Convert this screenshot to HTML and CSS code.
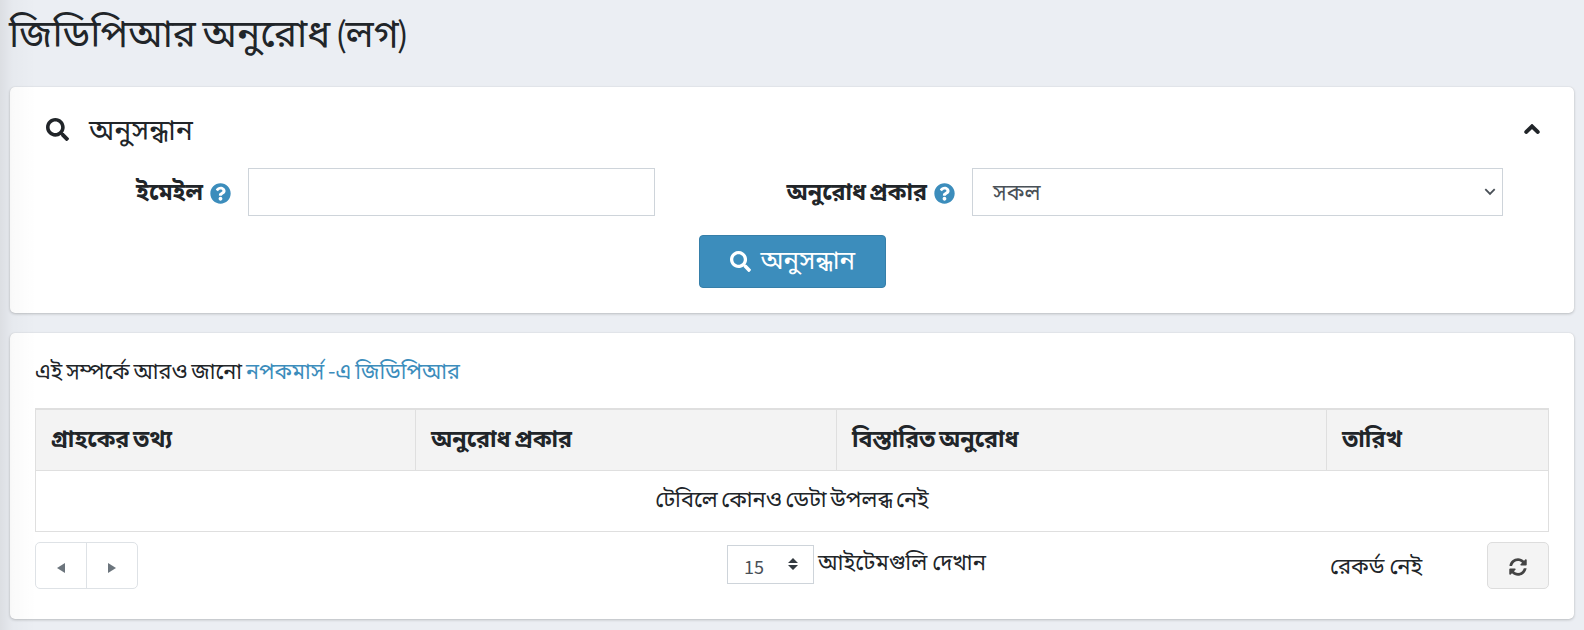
FILE: index.html
```html
<!DOCTYPE html>
<html lang="bn">
<head>
<meta charset="utf-8">
<title>জিডিপিআর অনুরোধ (লগ)</title>
<link rel="stylesheet" href="styles.css">
</head>
<body>
<svg class="defs" width="0" height="0" aria-hidden="true">
  <symbol id="search" viewBox="0 0 512 512"><path d="M505 442.7L405.3 343c-4.5-4.5-10.6-7-17-7H372c27.6-35.3 44-79.7 44-128C416 93.1 322.9 0 208 0S0 93.1 0 208s93.1 208 208 208c48.3 0 92.700-16.400 128-44v16.300c0 6.400 2.500 12.500 7 17l99.700 99.700c9.400 9.400 24.600 9.400 33.900 0l28.300-28.300c9.400-9.400 9.400-24.600.1-34zM208 336c-70.700 0-128-57.200-128-128 0-70.700 57.200-128 128-128 70.700 0 128 57.200 128 128 0 70.700-57.200 128-128 128z"/></symbol>
  <symbol id="question" viewBox="0 0 512 512"><path d="M504 256c0 136.997-111.043 248-248 248S8 392.997 8 256C8 119.083 119.043 8 256 8s248 111.083 248 248zM262.655 90c-54.497 0-89.255 22.957-116.549 63.758-3.536 5.286-2.353 12.415 2.715 16.258l34.699 26.310c5.205 3.947 12.621 3.008 16.665-2.122 17.864-22.658 30.113-35.797 57.303-35.797 20.429 0 45.698 13.148 45.698 32.958 0 14.976-12.363 22.667-32.534 33.976C247.128 238.528 216 254.941 216 296v4c0 6.627 5.373 12 12 12h56c6.627 0 12-5.373 12-12v-1.333c0-28.462 83.186-29.647 83.186-106.667 0-58.002-60.165-102-116.531-102zM256 338c-25.365 0-46 20.635-46 46 0 25.364 20.635 46 46 46s46-20.636 46-46c0-25.365-20.635-46-46-46z"/></symbol>
  <symbol id="sync" viewBox="0 0 512 512"><path d="M370.720 133.280C339.458 104.008 298.888 87.962 255.848 88c-77.458.068-144.328 53.178-162.791 126.850-1.344 5.363-6.122 9.150-11.651 9.150H24.103c-7.498 0-13.194-6.807-11.807-14.176C33.933 94.924 134.813 8 256 8c66.448 0 126.791 26.136 171.315 68.685L463.030 40.970C478.149 25.851 504 36.559 504 57.941V192c0 13.255-10.745 24-24 24H345.941c-21.382 0-32.090-25.851-16.971-40.971l41.750-41.749zM32 296h134.059c21.382 0 32.090 25.851 16.971 40.971l-41.750 41.750c31.262 29.273 71.835 45.319 114.876 45.280 77.418-.070 144.315-53.144 162.787-126.849 1.344-5.363 6.122-9.150 11.651-9.150h57.304c7.498 0 13.194 6.807 11.807 14.176C478.067 417.076 377.187 504 256 504c-66.448 0-126.791-26.136-171.315-68.685L48.970 471.030C33.851 486.149 8 475.441 8 454.059V320c0-13.255 10.745-24 24-24z"/></symbol>
</svg>
<main class="page">
  <h1 class="page-title">জিডিপিআর অনুরোধ <span class="paren">(</span>লগ<span class="paren">)</span></h1>

  <section class="card search-card">
    <header class="search-head">
      <svg class="search-icon"><use href="#search"/></svg>
      <span class="search-title">অনুসন্ধান</span>
      <svg class="toggle" viewBox="0 0 16 10"><path d="M2.300 7.900 8 2.400l5.700 5.500"/></svg>
    </header>
    <div class="filters">
      <label class="label label-email"><span class="label-text">ইমেইল</span><svg class="help"><use href="#question"/></svg></label>
      <div class="field"></div>
      <label class="label label-type"><span class="label-text">অনুরোধ প্রকার</span><svg class="help"><use href="#question"/></svg></label>
      <div class="field select"><span>সকল</span><svg class="chevron" viewBox="0 0 12 8"><path d="m1.300 1.200 4.700 4.800 4.700-4.800"/></svg></div>
    </div>
    <div class="actions">
      <button class="btn-search"><svg><use href="#search"/></svg><span>অনুসন্ধান</span></button>
    </div>
  </section>

  <section class="card log-card">
    <p class="intro">এই সম্পর্কে আরও জানো <a class="link">নপকমার্স -এ জিডিপিআর</a></p>
    <table class="grid">
      <thead><tr><th class="c1">গ্রাহকের তথ্য</th><th class="c2">অনুরোধ প্রকার</th><th class="c3">বিস্তারিত অনুরোধ</th><th>তারিখ</th></tr></thead>
      <tbody><tr><td colspan="4">টেবিলে কোনও ডেটা উপলব্ধ নেই</td></tr></tbody>
    </table>
    <footer class="footer">
      <div class="pager">
        <span><svg viewBox="0 0 8 10"><path d="M8 0v10L0 5z"/></svg></span>
        <span><svg viewBox="0 0 8 10"><path d="M0 0v10l8-5z"/></svg></span>
      </div>
      <div class="length">
        <div class="length-select"><span>15</span><svg viewBox="0 0 10 12"><path d="M0 5h10L5 0zM0 7h10l-5 5z"/></svg></div>
        <span class="length-text">আইটেমগুলি দেখান</span>
      </div>
      <span class="info">রেকর্ড নেই</span>
      <button class="refresh"><svg><use href="#sync"/></svg></button>
    </footer>
  </section>
</main>
</body>
</html>
```
FILE: styles.css
```css
* { box-sizing: border-box; }
body {
  margin: 0;
  height: 630px;
  overflow: hidden;
  background: #ebeef3;
  color: #212529;
  font: 22px/33px "Noto Sans CJK SC", "Noto Sans Bengali", "Noto Sans", sans-serif;
}
.defs { position: absolute; }
svg { display: block; fill: currentColor; flex: none; }
.page { position: relative; height: 630px; padding: 0 10px; }
.page::after {
  content: "";
  position: absolute;
  inset: 0 auto 0 0;
  width: 36px;
  background: linear-gradient(90deg, rgba(0,0,0,.065), rgba(0,0,0,.02) 35%, rgba(0,0,0,0));
}
.page-title { margin: 0 0 0 -1px; height: 87px; padding-top: 7px; font-size: 38.6px; line-height: 46px; font-weight: 400; white-space: nowrap; word-spacing: -2px; }
.paren { font-size: 34px; line-height: 1; margin: 0 -1.500px; }
.card { background: #fff; border-radius: 5px; box-shadow: 0 0 1px rgba(0,0,0,.125), 0 1px 3px rgba(0,0,0,.2); }
.search-card { height: 226px; margin-bottom: 20px; padding: 23px 34px 0 36px; }
.search-head { display: flex; align-items: center; height: 39px; }
.search-icon { width: 23px; height: 23px; }
.search-title { font-size: 28.4px; margin-left: 20px; padding-bottom: 4px; }
.toggle { width: 16px; height: 10px; margin: 0 0 2px auto; }
.toggle path, .chevron path { fill: none; stroke: currentColor; }
.toggle path { stroke-width: 4; stroke-linecap: round; }
.filters { display: grid; grid-template-columns: 202px 407px 317px 531px; height: 48px; margin-top: 19px; }
.label { display: flex; align-items: center; justify-content: flex-end; gap: 7px; padding-right: 17px; font-size: 23.200px; font-weight: 700; word-spacing: -2px; }
.label-text { padding-bottom: 4px; }
.help { width: 21px; height: 21px; color: #3c8dbc; margin-top: 2px; }
.field { border: 1px solid #ced4da; display: flex; align-items: center; justify-content: space-between; padding: 0 6px 0 20px; color: #495057; }
.select span { padding-bottom: 4px; }
.chevron { width: 12px; height: 8px; }
.chevron path { stroke-width: 1.800; }
.actions { display: flex; justify-content: center; margin: 19px 2px 0 0; }
.btn-search {
  display: flex; align-items: center; gap: 10px;
  width: 187px; height: 53px; padding: 0 0 0 30px;
  border: 1px solid #367fa9; border-radius: 4px;
  background: #3c8dbc; color: #fff; font: inherit; font-size: 25.900px; line-height: 34px;
}
.btn-search svg { width: 21px; height: 21px; }
.btn-search span { padding-bottom: 8px; }
.log-card { height: 286px; padding: 20px 25px 0 25px; }
.intro { margin: 0; height: 55px; font-size: 21.600px; word-spacing: -1px; }
.link { color: #3c8dbc; }
.grid { width: 1514px; height: 123px; border-collapse: collapse; table-layout: fixed; }
.grid th { text-align: left; background: #f3f3f3; height: 61px; padding: 0 15px 4px; border: 1px solid #dfdfdf; border-top-width: 2px; font-size: 23.200px; font-weight: 700; word-spacing: -1.500px; }
.grid td { height: 61px; text-align: center; border: 1px solid #dfdfdf; padding: 0 0 6px; font-size: 21.800px; word-spacing: -1.200px; }
.c1 { width: 380px; }
.c2 { width: 421px; }
.c3 { width: 490px; }
.footer { display: grid; grid-template-columns: 692px 603px 157px 62px; height: 47px; margin-top: 10px; }
.pager { display: flex; width: 103px; height: 47px; border: 1px solid #dee2e6; border-radius: 5px; color: #6c757d; }
.pager span { flex: 1; display: flex; align-items: center; justify-content: center; padding-top: 5px; }
.pager span + span { border-left: 1px solid #dee2e6; }
.pager svg { width: 8px; height: 10px; }
.length { display: flex; gap: 4px; padding-top: 3px; }
.length-select { display: flex; align-items: center; justify-content: space-between; width: 87px; height: 39px; padding: 0 15px 0 16px; border: 1px solid #ced4da; color: #495057; font-size: 18px; }
.length-select span { padding-top: 4px; }
.length-select svg { width: 10px; height: 12px; color: #343a40; }
.length-text { line-height: 31px; }
.info { line-height: 45px; }
.refresh { display: flex; align-items: center; justify-content: center; padding: 3px 0 0; background: #f4f4f4; border: 1px solid #ddd; border-radius: 5px; color: #444; }
.refresh svg { width: 18px; height: 18px; }
```
